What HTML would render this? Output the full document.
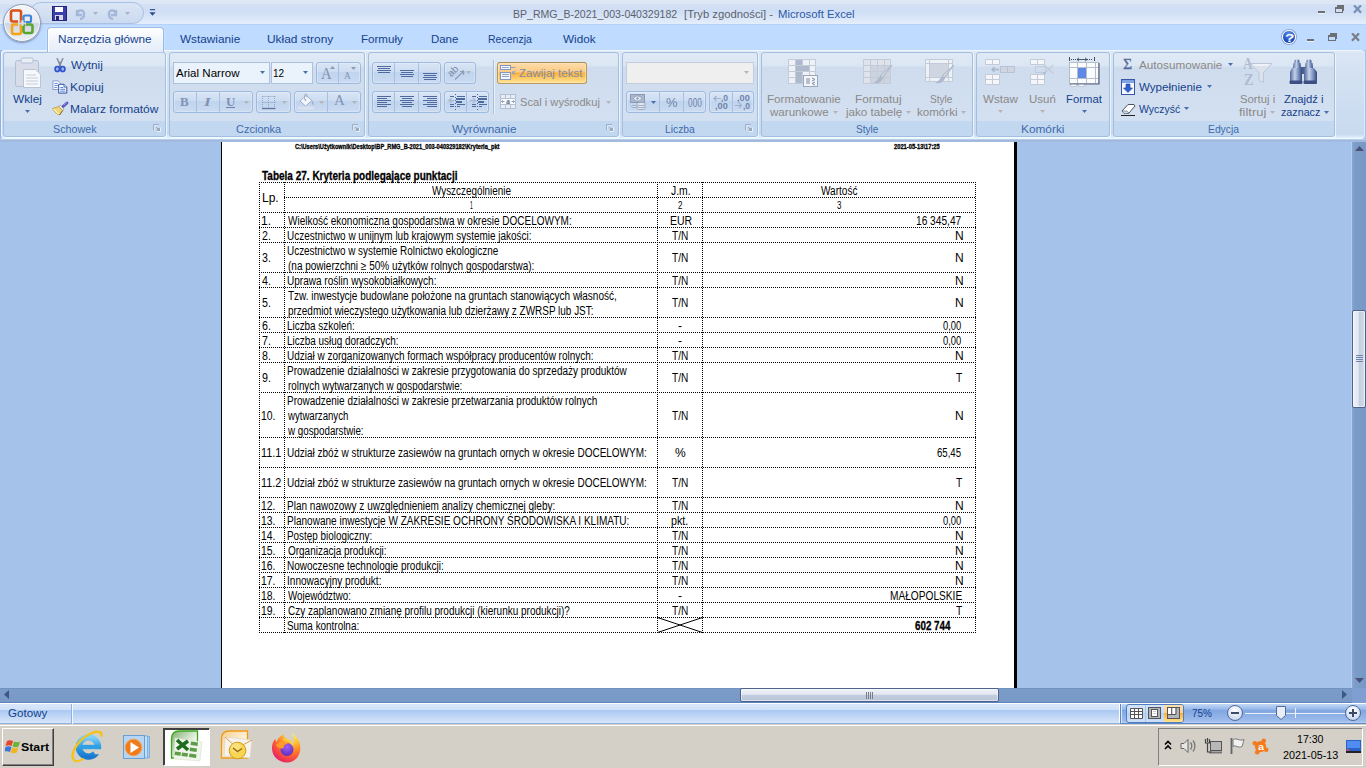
<!DOCTYPE html>
<html lang="pl"><head><meta charset="utf-8"><title>BP_RMG_B-2021_003-040329182 [Tryb zgodności] - Microsoft Excel</title>
<style>
html,body{margin:0;padding:0;background:#d4d0c8;overflow:hidden}
#screen{position:relative;width:1366px;height:768px;overflow:hidden;font-family:'Liberation Sans',sans-serif;font-size:12px;background:#a4c2ea}
#screen div,#screen svg{position:absolute;box-sizing:border-box}
.t{position:absolute;white-space:nowrap;line-height:1;transform-origin:0 0;display:block}
.grp{border:1px solid #a3bfe0;border-radius:3px;background:linear-gradient(to bottom,#e0eaf6 0,#dbe6f4 13px,#cfdcee 14px,#d3e0f1 68px,#c2d8f1 68px,#c2d8f1 100%);box-shadow:1px 1px 0 rgba(255,255,255,.65)}
.btn{border:1px solid #9dbae1;border-radius:3px;background:linear-gradient(to bottom,#d9e5f5 0,#ccdcf1 45%,#c0d4ee 46%,#cadbf1 100%);box-shadow:inset 0 0 0 1px rgba(255,255,255,.25)}
.sep{background:#a6c0e3}

</style></head>
<body>
<div id="screen">
<!-- ribbon -->
<div style="left:0px;top:49px;width:1366px;height:90px;background:#a9c3e8"></div>
<div style="left:0px;top:49px;width:1365px;height:90px;border:1px solid #8db2e3;border-bottom-color:#e6fcff;border-right-color:#cdeefb;border-radius:4px;background:linear-gradient(to bottom,#e4edf9 0,#dbe6f5 3px,#d2e0f2 30px,#c9daf0 84px,#d4e4f6 86px,#e4f0fc 88px);box-shadow:inset 1px 1px 0 #eef4fc"></div>
<div style="left:0px;top:139px;width:1366px;height:3px;background:linear-gradient(to bottom,#b9cbe6 0,#b9cbe6 1px,#a3b8da 1px,#a3b8da 2px,#a2bbe2 2px)"></div>
<div class="grp" style="left:3px;top:52px;width:163px;height:85px;"></div>
<span class="t" style="left:53.00px;top:123px;font:normal normal 11px 'Liberation Sans',sans-serif;color:#3e6aaa;transform:scaleX(0.9778);">Schowek</span>
<svg style="left:153px;top:124px" width="8" height="8" viewBox="0 0 8 8"><path d="M0.500 6V0.500H6" fill="none" stroke="#9fadc4"/><rect x="3" y="3" width="1" height="1" fill="#9fadc4"/><rect x="4" y="4" width="3" height="3" fill="#9eaabc"/><path d="M7.500 3.500v4H4" fill="none" stroke="#e6effa"/><path d="M1.500 6V1.500H6" fill="none" stroke="#e6effa" opacity=".7"/></svg>
<div class="grp" style="left:169px;top:52px;width:196px;height:85px;"></div>
<span class="t" style="left:236.00px;top:123px;font:normal normal 11px 'Liberation Sans',sans-serif;color:#3e6aaa;transform:scaleX(1.0000);">Czcionka</span>
<svg style="left:352px;top:124px" width="8" height="8" viewBox="0 0 8 8"><path d="M0.500 6V0.500H6" fill="none" stroke="#9fadc4"/><rect x="3" y="3" width="1" height="1" fill="#9fadc4"/><rect x="4" y="4" width="3" height="3" fill="#9eaabc"/><path d="M7.500 3.500v4H4" fill="none" stroke="#e6effa"/><path d="M1.500 6V1.500H6" fill="none" stroke="#e6effa" opacity=".7"/></svg>
<div class="grp" style="left:368px;top:52px;width:251px;height:85px;"></div>
<span class="t" style="left:452.00px;top:123px;font:normal normal 11px 'Liberation Sans',sans-serif;color:#3e6aaa;transform:scaleX(1.0667);">Wyrównanie</span>
<svg style="left:606px;top:124px" width="8" height="8" viewBox="0 0 8 8"><path d="M0.500 6V0.500H6" fill="none" stroke="#9fadc4"/><rect x="3" y="3" width="1" height="1" fill="#9fadc4"/><rect x="4" y="4" width="3" height="3" fill="#9eaabc"/><path d="M7.500 3.500v4H4" fill="none" stroke="#e6effa"/><path d="M1.500 6V1.500H6" fill="none" stroke="#e6effa" opacity=".7"/></svg>
<div class="grp" style="left:622px;top:52px;width:136px;height:85px;"></div>
<span class="t" style="left:665.06px;top:123px;font:normal normal 11px 'Liberation Sans',sans-serif;color:#3e6aaa;transform:scaleX(0.9355);">Liczba</span>
<svg style="left:745px;top:124px" width="8" height="8" viewBox="0 0 8 8"><path d="M0.500 6V0.500H6" fill="none" stroke="#9fadc4"/><rect x="3" y="3" width="1" height="1" fill="#9fadc4"/><rect x="4" y="4" width="3" height="3" fill="#9eaabc"/><path d="M7.500 3.500v4H4" fill="none" stroke="#e6effa"/><path d="M1.500 6V1.500H6" fill="none" stroke="#e6effa" opacity=".7"/></svg>
<div class="grp" style="left:761px;top:52px;width:212px;height:85px;"></div>
<span class="t" style="left:856.00px;top:123px;font:normal normal 11px 'Liberation Sans',sans-serif;color:#3e6aaa;transform:scaleX(0.9167);">Style</span>
<div class="grp" style="left:976px;top:52px;width:134px;height:85px;"></div>
<span class="t" style="left:1020.92px;top:123px;font:normal normal 11px 'Liberation Sans',sans-serif;color:#3e6aaa;transform:scaleX(1.0769);">Komórki</span>
<div class="grp" style="left:1113px;top:52px;width:222px;height:85px;"></div>
<span class="t" style="left:1208.06px;top:123px;font:normal normal 11px 'Liberation Sans',sans-serif;color:#3e6aaa;transform:scaleX(0.9375);">Edycja</span>
<svg style="left:14px;top:57px" width="28" height="32" viewBox="0 0 28 32"><rect x="1.5" y="3.5" width="23" height="26" rx="2" fill="#d6dde9" stroke="#b3bfd3"/><rect x="7" y="1" width="12" height="5" rx="1.5" fill="#e9edf4" stroke="#b3bfd3"/><path d="M9.5 12.5h12l5 5v13h-17z" fill="#f6f8fb" stroke="#b9c4d6"/><path d="M12 18h10M12 21h12M12 24h12M12 27h12" stroke="#c5cedd"/></svg>
<span class="t" style="left:13.00px;top:93px;font:normal normal 11px 'Liberation Sans',sans-serif;color:#15428b;transform:scaleX(1.0741);">Wklej</span>
<svg style="left:25px;top:110px" width="5" height="3" viewBox="0 0 5 3"><path d="M0 0h5L2.500 3z" fill="#4b6fae"/></svg>
<svg style="left:54px;top:57px" width="12" height="16" viewBox="0 0 12 16"><path d="M3 1l4 9M9 1L5 10" stroke="#7d8696" stroke-width="1.700" fill="none"/><path d="M3.300 1l1.500 3.500M8.700 1L7.200 4.500" stroke="#aeb6c4" stroke-width=".8" fill="none"/><ellipse cx="3.300" cy="12" rx="2.200" ry="2.500" fill="#9fb6ef" stroke="#2f55c8" stroke-width="1.700"/><ellipse cx="8.700" cy="12" rx="2.200" ry="2.500" fill="#9fb6ef" stroke="#2f55c8" stroke-width="1.700"/></svg>
<span class="t" style="left:71.00px;top:59px;font:normal normal 11px 'Liberation Sans',sans-serif;color:#15428b;transform:scaleX(1.0667);">Wytnij</span>
<svg style="left:52px;top:80px" width="16" height="14" viewBox="0 0 16 14"><path d="M0.900 0.900h5.200l2.400 2.400v6.200H0.900z" fill="#fbfcfe" stroke="#7f94c4" stroke-width=".9"/><path d="M2.300 3.500h3.500M2.300 5.500h4.500M2.300 7.500h3" stroke="#5b84d8" stroke-width=".9"/><path d="M6.700 4.300h5.300l2.800 2.800v6H6.700z" fill="#fbfcfe" stroke="#3450a0" stroke-width="1"/><path d="M12 4.300v2.800h2.800" fill="#dfe7f7" stroke="#3450a0" stroke-width=".8"/><path d="M8.300 7.500h3M8.300 9.300h5M8.300 11.200h5" stroke="#3f74d8" stroke-width=".9"/></svg>
<span class="t" style="left:69.90px;top:81px;font:normal normal 11px 'Liberation Sans',sans-serif;color:#15428b;transform:scaleX(1.1034);">Kopiuj</span>
<svg style="left:52px;top:101px" width="17" height="16" viewBox="0 0 17 16"><path d="M11 5.500l4-3.500" stroke="#5a4fc0" stroke-width="2.800" stroke-linecap="round"/><path d="M12 4l2.500-2" stroke="#9a92e8" stroke-width="1" stroke-linecap="round"/><path d="M8.200 4.200l4 4-1.600 1.400-4-4z" fill="#e8eaee" stroke="#8a8f9a" stroke-width=".7"/><path d="M6.800 5.500l3.800 4-3 4.500c-2.500-.500-5.500-3-7-6.500z" fill="#ecd67a" stroke="#b89638" stroke-width=".8"/><path d="M1.500 8l5 5" stroke="#fbf0b8" stroke-width="1.200"/><path d="M7.500 14l3-4.300" stroke="#8a6a20" stroke-width="1"/></svg>
<span class="t" style="left:69.91px;top:103px;font:normal normal 11px 'Liberation Sans',sans-serif;color:#15428b;transform:scaleX(1.0875);">Malarz formatów</span>
<div style="left:173px;top:62px;width:97px;height:22px;border:1px solid #abc1de;background:#eaf2fb"></div>
<span class="t" style="left:176.00px;top:67px;font:normal normal 11px 'Liberation Sans',sans-serif;color:#000;transform:scaleX(1.0492);">Arial Narrow</span>
<svg style="left:260px;top:71px" width="5" height="3" viewBox="0 0 5 3"><path d="M0 0h5L2.500 3z" fill="#4b6fae"/></svg>
<div style="left:271px;top:62px;width:42px;height:22px;border:1px solid #abc1de;background:#eaf2fb"></div>
<span class="t" style="left:273.09px;top:67px;font:normal normal 11px 'Liberation Sans',sans-serif;color:#000;transform:scaleX(0.9091);">12</span>
<svg style="left:303px;top:71px" width="5" height="3" viewBox="0 0 5 3"><path d="M0 0h5L2.500 3z" fill="#4b6fae"/></svg>
<div class="btn" style="left:316px;top:62px;width:45px;height:22px;"></div>
<div class="sep" style="left:338px;top:63px;width:1px;height:20px;"></div>
<span class="t" style="left:321.00px;top:65px;font:normal normal 16px 'Liberation Serif',serif;color:#8292b2;transform:scaleX(0.9167);">A</span>
<span class="t" style="left:344.00px;top:70px;font:normal normal 10.5px 'Liberation Serif',serif;color:#8292b2;transform:scaleX(0.8750);">A</span>
<svg style="left:330px;top:66px" width="26" height="4" viewBox="0 0 26 4"><path d="M0 3l2.500-3L5 3z" fill="#8e9ab0"/><path d="M21 1h5l-2.500 3z" fill="#8e9ab0"/></svg>
<div class="btn" style="left:173px;top:91px;width:80px;height:22px;"></div>
<div class="sep" style="left:196px;top:92px;width:1px;height:20px;"></div>
<div class="sep" style="left:219px;top:92px;width:1px;height:20px;"></div>
<span class="t" style="left:180.00px;top:94px;font:normal bold 13px 'Liberation Serif',serif;color:#8292b2;transform:scaleX(1.0000);">B</span>
<span class="t" style="left:204.00px;top:94px;font:italic bold 13px 'Liberation Serif',serif;color:#8292b2;transform:scaleX(1.3333);">I</span>
<span class="t" style="left:226.00px;top:94px;font:normal bold 13px 'Liberation Serif',serif;color:#8292b2;transform:scaleX(1.0000);">U</span>
<div style="left:226px;top:107px;width:9px;height:1px;background:#6f83aa"></div>
<svg style="left:244px;top:101px" width="5" height="3" viewBox="0 0 5 3"><path d="M0 0h5L2.500 3z" fill="#b3b5b9"/></svg>
<div class="btn" style="left:256px;top:91px;width:35px;height:22px;"></div>
<svg style="left:262px;top:96px" width="14" height="14" viewBox="0 0 14 14"><path d="M0.500 0.500h13M0.500 6.500h13M0.500 0v12M6.500 0v12M12.500 0v12" fill="none" stroke="#93a3c2" stroke-dasharray="1 1"/><path d="M0 12.500h13.500" stroke="#5f739c" stroke-width="1.300"/></svg>
<svg style="left:282px;top:101px" width="5" height="3" viewBox="0 0 5 3"><path d="M0 0h5L2.500 3z" fill="#b3b5b9"/></svg>
<div class="btn" style="left:294px;top:91px;width:67px;height:22px;"></div>
<div class="sep" style="left:327px;top:92px;width:1px;height:20px;"></div>
<svg style="left:297px;top:93px" width="18" height="17" viewBox="0 0 18 17"><path d="M3 8l6-5.500 6 5-6.500 5.500z" fill="#f3f6fb" stroke="#9aa9c6" stroke-width=".9"/><path d="M7.500 6.500V2.200c0-1.500 2.600-1.500 2.600 0v2" fill="none" stroke="#9aa9c6" stroke-width=".9"/><path d="M15 7.500c1.500 1.500 2 3.500 1.500 5-.800-1-2-2.500-1.500-5z" fill="#9aa9c6"/><circle cx="8.500" cy="7" r="1" fill="#aab6cf"/><rect x="1" y="13.500" width="16" height="3" fill="#d8e0ee"/></svg>
<svg style="left:319px;top:101px" width="5" height="3" viewBox="0 0 5 3"><path d="M0 0h5L2.500 3z" fill="#b3b5b9"/></svg>
<span class="t" style="left:334.00px;top:92px;font:normal normal 15px 'Liberation Serif',serif;color:#8292b2;transform:scaleX(1.0000);">A</span>
<svg style="left:352px;top:101px" width="5" height="3" viewBox="0 0 5 3"><path d="M0 0h5L2.500 3z" fill="#b3b5b9"/></svg>
<div class="btn" style="left:372px;top:62px;width:69px;height:22px;"></div>
<div class="sep" style="left:394px;top:63px;width:1px;height:20px;"></div>
<div class="sep" style="left:418px;top:63px;width:1px;height:20px;"></div>
<svg style="left:377px;top:66px" width="14" height="8" viewBox="0 0 14 8"><rect x="0" y="0" width="14" height="1" fill="#4f6a9c"/><rect x="1" y="2" width="12" height="1" fill="#4f6a9c"/><rect x="0" y="4" width="14" height="1" fill="#4f6a9c"/><rect x="1" y="6" width="12" height="1" fill="#4f6a9c"/></svg>
<svg style="left:400px;top:70px" width="14" height="8" viewBox="0 0 14 8"><rect x="0" y="0" width="14" height="1" fill="#4f6a9c"/><rect x="1" y="2" width="12" height="1" fill="#4f6a9c"/><rect x="0" y="4" width="14" height="1" fill="#4f6a9c"/><rect x="1" y="6" width="12" height="1" fill="#4f6a9c"/></svg>
<svg style="left:423px;top:73px" width="14" height="8" viewBox="0 0 14 8"><rect x="0" y="0" width="14" height="1" fill="#4f6a9c"/><rect x="1" y="2" width="12" height="1" fill="#4f6a9c"/><rect x="0" y="4" width="14" height="1" fill="#4f6a9c"/><rect x="1" y="6" width="12" height="1" fill="#4f6a9c"/></svg>
<div class="btn" style="left:444px;top:62px;width:32px;height:22px;"></div>
<svg style="left:448px;top:64px" width="17" height="17" viewBox="0 0 17 17"><path d="M7 15.500L16 7M16 7l-4 .500M16 7l-.500 4" stroke="#8a9ab8" stroke-width="1.100" fill="none"/></svg>
<span class="t" style="left:445.00px;top:71px;font:normal normal 10px 'Liberation Sans',sans-serif;color:#7b8aa8;transform:scaleX(1.0000);rotate:-45deg">ab</span>
<svg style="left:466px;top:71px" width="5" height="3" viewBox="0 0 5 3"><path d="M0 0h5L2.500 3z" fill="#b3b5b9"/></svg>
<div class="btn" style="left:372px;top:91px;width:69px;height:22px;"></div>
<div class="sep" style="left:394px;top:92px;width:1px;height:20px;"></div>
<div class="sep" style="left:418px;top:92px;width:1px;height:20px;"></div>
<svg style="left:377px;top:96px" width="14" height="12" viewBox="0 0 14 12"><rect x="0" y="0" width="14" height="1" fill="#4f6a9c"/><rect x="0" y="2" width="10" height="1" fill="#4f6a9c"/><rect x="0" y="4" width="14" height="1" fill="#4f6a9c"/><rect x="0" y="6" width="10" height="1" fill="#4f6a9c"/><rect x="0" y="8" width="14" height="1" fill="#4f6a9c"/><rect x="0" y="10" width="10" height="1" fill="#4f6a9c"/></svg>
<svg style="left:400px;top:96px" width="14" height="12" viewBox="0 0 14 12"><rect x="0" y="0" width="14" height="1" fill="#4f6a9c"/><rect x="2" y="2" width="10" height="1" fill="#4f6a9c"/><rect x="0" y="4" width="14" height="1" fill="#4f6a9c"/><rect x="2" y="6" width="10" height="1" fill="#4f6a9c"/><rect x="0" y="8" width="14" height="1" fill="#4f6a9c"/><rect x="2" y="10" width="10" height="1" fill="#4f6a9c"/></svg>
<svg style="left:423px;top:96px" width="14" height="12" viewBox="0 0 14 12"><rect x="0" y="0" width="14" height="1" fill="#4f6a9c"/><rect x="4" y="2" width="10" height="1" fill="#4f6a9c"/><rect x="0" y="4" width="14" height="1" fill="#4f6a9c"/><rect x="4" y="6" width="10" height="1" fill="#4f6a9c"/><rect x="0" y="8" width="14" height="1" fill="#4f6a9c"/><rect x="4" y="10" width="10" height="1" fill="#4f6a9c"/></svg>
<div class="btn" style="left:444px;top:91px;width:45px;height:22px;"></div>
<div class="sep" style="left:466px;top:92px;width:1px;height:20px;"></div>
<svg style="left:448px;top:94px" width="17" height="16" viewBox="0 0 17 16"><path d="M7.500 0v16" stroke="#4f6a9c" stroke-dasharray="1 2"/><path d="M2 2.500h4M9 2.500h8M2 10.500h4M9 10.500h8M2 12.500h4M9 12.500h3" stroke="#4f6a9c"/><rect x="8" y="4" width="9" height="2" fill="#4f6a9c"/><rect x="8" y="7" width="6" height="2" fill="#4f6a9c"/><path d="M6 6.500H1M3.500 4L1 6.500 3.500 9" stroke="#a9b8d3" stroke-width="1.300" fill="none"/></svg>
<svg style="left:470px;top:94px" width="17" height="16" viewBox="0 0 17 16"><path d="M7.500 0v16" stroke="#4f6a9c" stroke-dasharray="1 2"/><path d="M2 2.500h4M9 2.500h8M2 10.500h4M9 10.500h8M2 12.500h4M9 12.500h3" stroke="#4f6a9c"/><rect x="8" y="4" width="9" height="2" fill="#4f6a9c"/><rect x="8" y="7" width="6" height="2" fill="#4f6a9c"/><path d="M0 6.500h5M3 4l2.500 2.500L3 9" stroke="#a9b8d3" stroke-width="1.300" fill="none"/></svg>
<div style="left:493px;top:60px;width:1px;height:54px;background:#a9bfdb"></div>
<div style="left:494px;top:60px;width:1px;height:54px;background:#e9f1fa"></div>
<div style="left:497px;top:62px;width:90px;height:22px;border:1px solid #b89a5c;border-top-color:#a98b55;border-radius:3px;background:linear-gradient(to bottom,#fddcaa 0,#fccb84 45%,#fbb03c 50%,#fdd06f 80%,#fee497 100%);box-shadow:inset 0 0 0 1px rgba(255,240,200,.5)"></div>
<svg style="left:500px;top:65px" width="17" height="15" viewBox="0 0 17 15"><rect x="0.500" y="0.500" width="10" height="4" fill="#f3f6fb" stroke="#8496c0"/><path d="M2 2.500h7" stroke="#8496c0" stroke-width=".8"/><path d="M10.500 2.500h5" fill="none" stroke="#8496c0" stroke-width=".9"/><path d="M15.500 5.500l-2.500 3M12.800 6v2.700h2.700" fill="none" stroke="#7e9ad0" stroke-width=".9"/><rect x="0.500" y="7.500" width="10" height="7" fill="#f3f6fb" stroke="#8496c0"/><path d="M2 9.500h7M2 11.500h7" stroke="#8496c0" stroke-width=".9"/></svg>
<span class="t" style="left:519.00px;top:67px;font:normal normal 11px 'Liberation Sans',sans-serif;color:#848ca2;transform:scaleX(1.0492);">Zawijaj tekst</span>
<svg style="left:500px;top:94px" width="16" height="15" viewBox="0 0 16 15"><rect x="0.500" y="0.500" width="15" height="14" fill="#e9edf4" stroke="#b4bfd2"/><path d="M0.500 4.500h15M0.500 10.500h15M5.500 0.500v4M10.500 0.500v4M5.500 10.500v4M10.500 10.500v4" stroke="#b4bfd2"/><rect x="1" y="5" width="14" height="5" fill="#fbfcfe"/><path d="M1.500 7.500h3M11.500 7.500h3M3 6.300L1.500 7.500 3 8.700M13 6.300l1.500 1.200L13 8.700" stroke="#7f8daa" stroke-width=".8" fill="none"/></svg>
<span class="t" style="left:506.00px;top:97px;font:normal bold 8px 'Liberation Serif',serif;color:#5f6f8f;transform:scaleX(1.0000);">a</span>
<span class="t" style="left:520.00px;top:96px;font:normal normal 11px 'Liberation Sans',sans-serif;color:#8b8987;transform:scaleX(1.0127);">Scal i wyśrodkuj</span>
<svg style="left:606px;top:101px" width="5" height="3" viewBox="0 0 5 3"><path d="M0 0h5L2.500 3z" fill="#b3b5b9"/></svg>
<div style="left:626px;top:62px;width:128px;height:22px;border:1px solid #c3cddb;background:#efefef"></div>
<svg style="left:744px;top:71px" width="5" height="3" viewBox="0 0 5 3"><path d="M0 0h5L2.500 3z" fill="#b3b5b9"/></svg>
<div class="btn" style="left:626px;top:91px;width:80px;height:22px;"></div>
<div class="sep" style="left:659px;top:92px;width:1px;height:20px;"></div>
<div class="sep" style="left:683px;top:92px;width:1px;height:20px;"></div>
<svg style="left:630px;top:94px" width="17" height="16" viewBox="0 0 17 16"><rect x="0.500" y="0.500" width="14" height="8" fill="#aab6cc" stroke="#8d9bb6"/><ellipse cx="7.500" cy="4.500" rx="4" ry="2.600" fill="#dfe5ef" stroke="#8d9bb6" stroke-width=".8"/><path d="M6 4.500h3M7.500 3v3" stroke="#8d9bb6" stroke-width=".8"/><g fill="#e6ebf3" stroke="#8d9bb6" stroke-width=".8"><ellipse cx="11" cy="14" rx="4.500" ry="1.600"/><ellipse cx="11" cy="12" rx="4.500" ry="1.600"/><ellipse cx="11" cy="10" rx="4.500" ry="1.600"/><ellipse cx="4" cy="12.500" rx="2.500" ry="1"/></g></svg>
<svg style="left:651px;top:101px" width="5" height="3" viewBox="0 0 5 3"><path d="M0 0h5L2.500 3z" fill="#4b6fae"/></svg>
<span class="t" style="left:666.00px;top:95px;font:normal normal 13px 'Liberation Sans',sans-serif;color:#6f83aa;transform:scaleX(1.0000);">%</span>
<span class="t" style="left:688.00px;top:96px;font:normal normal 12.5px 'Liberation Sans',sans-serif;color:#6f83aa;transform:scaleX(0.6667);">000</span>
<div class="btn" style="left:709px;top:91px;width:45px;height:22px;"></div>
<div class="sep" style="left:732px;top:92px;width:1px;height:20px;"></div>
<span class="t" style="left:721.00px;top:93px;font:normal bold 8.5px 'Liberation Sans',sans-serif;color:#6f83aa;transform:scaleX(1.0000);">,0</span>
<span class="t" style="left:715.00px;top:101px;font:normal bold 8.5px 'Liberation Sans',sans-serif;color:#6f83aa;transform:scaleX(1.0833);">,00</span>
<span class="t" style="left:737.00px;top:93px;font:normal bold 8.5px 'Liberation Sans',sans-serif;color:#6f83aa;transform:scaleX(1.0833);">,00</span>
<span class="t" style="left:743.00px;top:101px;font:normal bold 8.5px 'Liberation Sans',sans-serif;color:#6f83aa;transform:scaleX(1.0000);">,0</span>
<svg style="left:713px;top:95px" width="30" height="14" viewBox="0 0 30 14"><path d="M8 3.500H1M3.500 1L1 3.500 3.500 6" stroke="#9fb0cf" stroke-width="1.200" fill="none"/><path d="M22 10.500h6.500M26 8l2.500 2.500L26 13" stroke="#9fb0cf" stroke-width="1.200" fill="none"/></svg>
<svg style="left:788px;top:59px" width="31" height="29" viewBox="0 0 31 29"><path d="M0.5 0.5h27v24h-27zM0.500 6.500h27M0.500 12.500h27M0.500 18.500h27M7.500 0.500v24M14.500 0.500v24M21.500 0.500v24" fill="#eef1f6" stroke="#c3cbd9"/><rect x="8" y="1" width="6" height="5" fill="#aeb9cd"/><rect x="8" y="7" width="13" height="5" fill="#aeb9cd"/><rect x="8" y="13" width="6" height="11" fill="#aeb9cd"/><rect x="15.500" y="16.500" width="14" height="11" fill="#f4f6fa" stroke="#9aa6bb"/><path d="M18 20h4M18 22h4M18 24h4M24 19l3 1.500-3 1.500M27 23l-3 1.500 3 1.500" stroke="#7d8aa3" fill="none"/></svg>
<span class="t" style="left:766.94px;top:93px;font:normal normal 11px 'Liberation Sans',sans-serif;color:#8b8987;transform:scaleX(1.0580);">Formatowanie</span>
<span class="t" style="left:770.00px;top:106px;font:normal normal 11px 'Liberation Sans',sans-serif;color:#8b8987;transform:scaleX(1.0536);">warunkowe</span>
<svg style="left:833px;top:110.5px" width="5" height="3" viewBox="0 0 5 3"><path d="M0 0h5L2.500 3z" fill="#b3b5b9"/></svg>
<svg style="left:863px;top:59px" width="31" height="29" viewBox="0 0 31 29"><path d="M0.5 0.5h27v24h-27zM0.500 6.500h27M0.500 12.500h27M0.500 18.500h27M7.500 0.500v24M14.500 0.500v24M21.500 0.500v24" fill="#dfe4ec" stroke="#c3cbd9"/><rect x="8" y="7" width="19" height="17" fill="#c4ccda" opacity=".7"/><path d="M29 6l-9 12-3 1 1-3z" fill="#d4dae5" stroke="#aab4c6"/><path d="M18 17c-3 1-3 5-8 7 5 1 9-1 10-5z" fill="#aeb9cd"/></svg>
<span class="t" style="left:854.93px;top:93px;font:normal normal 11px 'Liberation Sans',sans-serif;color:#8b8987;transform:scaleX(1.0714);">Formatuj</span>
<span class="t" style="left:846.00px;top:106px;font:normal normal 11px 'Liberation Sans',sans-serif;color:#8b8987;transform:scaleX(1.0566);">jako tabelę</span>
<svg style="left:906px;top:110.5px" width="5" height="3" viewBox="0 0 5 3"><path d="M0 0h5L2.500 3z" fill="#b3b5b9"/></svg>
<svg style="left:925px;top:59px" width="31" height="29" viewBox="0 0 31 29"><path d="M0.5 0.5h27v22h-27z" fill="#eef1f6" stroke="#c3cbd9"/><path d="M0.500 4.500h27M0.500 18.500h27M4.500 0.500v22M23.500 0.500v22" stroke="#c3cbd9"/><rect x="5" y="5" width="18" height="13" fill="#cfd6e2"/><path d="M29 6l-9 12-3 1 1-3z" fill="#d4dae5" stroke="#aab4c6"/><path d="M18 17c-3 1-3 5-8 7 5 1 9-1 10-5z" fill="#aeb9cd"/></svg>
<span class="t" style="left:930.00px;top:93px;font:normal normal 11px 'Liberation Sans',sans-serif;color:#8b8987;transform:scaleX(0.9167);">Style</span>
<span class="t" style="left:917.00px;top:106px;font:normal normal 11px 'Liberation Sans',sans-serif;color:#8b8987;transform:scaleX(1.0526);">komórki</span>
<svg style="left:961px;top:110.5px" width="5" height="3" viewBox="0 0 5 3"><path d="M0 0h5L2.500 3z" fill="#b3b5b9"/></svg>
<svg style="left:985px;top:59px" width="31" height="27" viewBox="0 0 31 27"><path d="M0.500 0.500h14v5h-14zM7.500 0.500v5" fill="#f4f6fa" stroke="#c3cbd9"/><path d="M0.500 15.500h14v10h-14zM7.500 15.500v10M0.500 20.500h14" fill="#f4f6fa" stroke="#c3cbd9"/><path d="M15.500 7.500h14v6h-14zM22.500 7.500v6" fill="#cfd6e2" stroke="#b9c2d3"/><path d="M14 10.500H7M9.500 8l-2.500 2.500 2.500 2.500" stroke="#aab4c6" stroke-width="1.300" fill="none"/></svg>
<span class="t" style="left:983.00px;top:93px;font:normal normal 11px 'Liberation Sans',sans-serif;color:#8b8987;transform:scaleX(1.0606);">Wstaw</span>
<svg style="left:998px;top:110px" width="5" height="3" viewBox="0 0 5 3"><path d="M0 0h5L2.500 3z" fill="#b9b4ae"/></svg>
<svg style="left:1030px;top:59px" width="27" height="27" viewBox="0 0 27 27"><path d="M0.500 0.500h14v5h-14zM7.500 0.500v5" fill="#f4f6fa" stroke="#c3cbd9"/><path d="M0.500 15.500h14v10h-14zM7.500 15.500v10M0.500 20.500h14" fill="#f4f6fa" stroke="#c3cbd9"/><path d="M5.500 7.500h10v6h-10z" fill="none" stroke="#aeb9cd" stroke-dasharray="1 1"/><path d="M14 6l9.500 8.500M23.500 6L14 14.500" stroke="#c3cbd9" stroke-width="1.400"/><circle cx="14.500" cy="14.300" r="1.200" fill="#aeb9cd"/></svg>
<span class="t" style="left:1028.96px;top:93px;font:normal normal 11px 'Liberation Sans',sans-serif;color:#8b8987;transform:scaleX(1.0417);">Usuń</span>
<svg style="left:1040px;top:110px" width="5" height="3" viewBox="0 0 5 3"><path d="M0 0h5L2.500 3z" fill="#b9b4ae"/></svg>
<svg style="left:1068px;top:57px" width="32" height="30" viewBox="0 0 32 30"><path d="M1.500 0v4M26.500 0v4" stroke="#3f4a5f"/><path d="M3 2.500h6M19 2.500h6" stroke="#3f4a5f" stroke-dasharray="1 1"/><path d="M9 2.500h10M11 0.800L9 2.500l2 1.700M17 0.800l2 1.700-2 1.700" stroke="#3f4a5f" fill="none" stroke-width=".9"/><path d="M2 26h7v2.500c-2 1.500-5 1.500-7 0zM10 26h7v2.500c-2 1.500-5 1.500-7 0z" fill="#fff" stroke="#aab4c6" stroke-width=".8"/><rect x="1.500" y="5.500" width="29" height="21" fill="#fbfcfe" stroke="#b4bdcc"/><path d="M1.500 10.500h29M1.500 21.500h29M9.500 5.500v21M18.500 5.500v21M27.500 5.500v21" stroke="#b4bdcc"/><rect x="10" y="11" width="8" height="10" fill="#5f88e4"/><path d="M31 6v21H2" fill="none" stroke="#5a6780" stroke-width="1.200"/></svg>
<span class="t" style="left:1065.97px;top:93px;font:normal normal 11px 'Liberation Sans',sans-serif;color:#15428b;transform:scaleX(1.0294);">Format</span>
<svg style="left:1082px;top:110px" width="5" height="3" viewBox="0 0 5 3"><path d="M0 0h5L2.500 3z" fill="#4b6fae"/></svg>
<span class="t" style="left:1123.00px;top:57px;font:normal normal 14px 'Liberation Serif',serif;color:#556a96;transform:scaleX(1.1250);-webkit-text-stroke:.3px #556a96">Σ</span>
<span class="t" style="left:1139.00px;top:59px;font:normal normal 11px 'Liberation Sans',sans-serif;color:#8b8987;transform:scaleX(1.0641);">Autosumowanie</span>
<svg style="left:1228px;top:63px" width="5" height="3" viewBox="0 0 5 3"><path d="M0 0h5L2.500 3z" fill="#4b6fae"/></svg>
<svg style="left:1121px;top:79px" width="14" height="16" viewBox="0 0 14 16"><rect x="0.5" y="0.5" width="13" height="15" fill="#f4f8ff" stroke="#3a56a5"/><rect x="1" y="1" width="12" height="3" fill="#7ea2e6"/><path d="M5 5h4v4h2.500L7 13.500 2.500 9H5z" fill="#2f62d0" stroke="#1b3f98" stroke-width=".6"/></svg>
<span class="t" style="left:1139.00px;top:81px;font:normal normal 11px 'Liberation Sans',sans-serif;color:#15428b;transform:scaleX(1.0500);">Wypełnienie</span>
<svg style="left:1207px;top:85px" width="5" height="3" viewBox="0 0 5 3"><path d="M0 0h5L2.500 3z" fill="#4b6fae"/></svg>
<svg style="left:1121px;top:102px" width="15" height="14" viewBox="0 0 15 14"><path d="M1 9l6-6.500h6l1 1.500-6 7H3z" fill="#fff" stroke="#4a5568"/><path d="M1 9l2 2.500h5l-2-2.500z" fill="#d9dee7" stroke="#4a5568" stroke-width=".6"/><path d="M0 13.500h14" stroke="#222"/></svg>
<span class="t" style="left:1139.00px;top:103px;font:normal normal 11px 'Liberation Sans',sans-serif;color:#15428b;transform:scaleX(0.9535);">Wyczyść</span>
<svg style="left:1184px;top:107px" width="5" height="3" viewBox="0 0 5 3"><path d="M0 0h5L2.500 3z" fill="#4b6fae"/></svg>
<svg style="left:1250px;top:62px" width="23" height="22" viewBox="0 0 23 22"><path d="M0.500 1.500h21.500l-8.500 9v10l-4.500-2v-8z" fill="#dce2ec" stroke="#bcc6d8"/><path d="M2 2h18l-2 2H4z" fill="#eef1f6"/></svg>
<span class="t" style="left:1243.00px;top:55px;font:normal bold 16px 'Liberation Serif',serif;color:#b0bbd0;transform:scaleX(0.8333);">A</span>
<span class="t" style="left:1244.00px;top:71px;font:normal bold 16px 'Liberation Serif',serif;color:#b0bbd0;transform:scaleX(0.9000);">Z</span>
<span class="t" style="left:1240.00px;top:93px;font:normal normal 11px 'Liberation Sans',sans-serif;color:#8b8987;transform:scaleX(1.0294);">Sortuj i</span>
<span class="t" style="left:1239.00px;top:106px;font:normal normal 11px 'Liberation Sans',sans-serif;color:#8b8987;transform:scaleX(1.1739);">filtruj</span>
<svg style="left:1270px;top:110.5px" width="5" height="3" viewBox="0 0 5 3"><path d="M0 0h5L2.500 3z" fill="#b3b5b9"/></svg>
<svg style="left:1289px;top:59px" width="29" height="26" viewBox="0 0 29 26"><defs><linearGradient id="bn" x1="0" x2="1"><stop offset="0" stop-color="#4f6598"/><stop offset=".4" stop-color="#c4d1ea"/><stop offset=".7" stop-color="#7d92c0"/><stop offset="1" stop-color="#33477a"/></linearGradient></defs><rect x="5.500" y="0.500" width="5" height="4" rx="1.500" fill="url(#bn)"/><rect x="17.500" y="0.500" width="5" height="4" rx="1.500" fill="url(#bn)"/><path d="M4.500 4h7l.500 5h-8z" fill="url(#bn)"/><path d="M16.500 4h7l.500 5h-8z" fill="url(#bn)"/><rect x="11" y="8" width="6" height="7" fill="#4a5f92"/><path d="M3 9h10v13H1V13z" fill="url(#bn)"/><path d="M15 9h10l3 4v9H15z" fill="url(#bn)"/><rect x="0.500" y="21.500" width="13" height="3.500" rx="1.200" fill="#3c4f82"/><rect x="14.500" y="21.500" width="13.500" height="3.500" rx="1.200" fill="#3c4f82"/></svg>
<span class="t" style="left:1284.00px;top:93px;font:normal normal 11px 'Liberation Sans',sans-serif;color:#15428b;transform:scaleX(1.0263);">Znajdź i</span>
<span class="t" style="left:1281.00px;top:106px;font:normal normal 11px 'Liberation Sans',sans-serif;color:#15428b;transform:scaleX(0.9750);">zaznacz</span>
<svg style="left:1324px;top:110.5px" width="5" height="3" viewBox="0 0 5 3"><path d="M0 0h5L2.500 3z" fill="#4b6fae"/></svg>
<!-- title bar -->
<div style="left:0px;top:0px;width:1366px;height:26px;background:linear-gradient(to bottom,#dde7f5 0,#dde7f5 4px,#d4e1f5 4px,#cfdef5 11px,#d8e5f8 17px,#e4eefb 24px,#b3d3f9 24px,#b3d3f9 25px,#bfdbff 25px)"></div>
<div style="left:0px;top:26px;width:1366px;height:24px;background:#bfdbff"></div>
<div style="left:30px;top:2px;width:114px;height:22px;border:1px solid #a9c0e2;border-radius:11px;background:linear-gradient(to bottom,#dbe6f5,#cbdaf0)"></div>
<svg style="left:52px;top:6px" width="15" height="15" viewBox="0 0 15 15"><rect x="0.5" y="0.5" width="14" height="14" fill="#3b3fa8" stroke="#23257a"/><rect x="3" y="1" width="8" height="5" fill="#fff"/><rect x="3" y="9" width="8" height="5" fill="#d8d8e8"/><rect x="4" y="10" width="3" height="4" fill="#23257a"/></svg>
<svg style="left:74px;top:6px" width="60" height="15" viewBox="0 0 60 15"><g fill="none" stroke="#a3b7d8" stroke-width="2.400"><path d="M3 4 v5 h5 M3 8 c1-5 8-5 7 1 c0 2-2 4-4 4"/><path d="M42 4 v5 h-5 M42 8 c-1-5-8-5-7 1 c0 2 2 4 4 4"/></g><path d="M19 6h5l-2.5 3z M51 6h5l-2.5 3z" fill="#aab3c0"/></svg>
<svg style="left:149px;top:9px" width="7" height="8" viewBox="0 0 8 9"><rect x="1" y="0" width="6" height="1.3" fill="#2b4f8c"/><path d="M0.5 3.5h7L4 7.5z" fill="#2b4f8c"/></svg>
<div style="left:3px;top:4px;width:38px;height:38px;border-radius:50%;background:linear-gradient(to bottom,#f4f6fa 0,#e6eaf2 48%,#cdd5e4 52%,#eef1f7 100%);border:1px solid #8f9db8;box-shadow:0 1px 2px rgba(60,80,120,.55),inset 0 0 0 1px rgba(255,255,255,.8)"></div>
<svg style="left:9px;top:9px" width="26" height="27" viewBox="0 0 26 27"><path d="M12 11.500V3.500c0-1.200-.800-2-2-2H4c-1.200 0-2 .800-2 2v7c0 1.200.800 2 2 2h5" fill="none" stroke="#d8501a" stroke-width="2.600" stroke-linejoin="round"/><path d="M14.500 11.500V8c0-1 .600-1.500 1.500-1.500h4.500c1 0 1.500.500 1.500 1.500v3.500c0 1-.500 1.500-1.500 1.500H17" fill="none" stroke="#3f86d6" stroke-width="2.200"/><path d="M9 15.500H5c-1.200 0-2 .800-2 2v5.500c0 1.200.800 2 2 2h5c1.200 0 2-.800 2-2V17" fill="none" stroke="#f3a417" stroke-width="2.600"/><path d="M17 15.500h4.500c1.200 0 2 .800 2 2V22c0 1.200-.800 2-2 2h-5c-1.200 0-2-.800-2-2v-5" fill="none" stroke="#5aa52f" stroke-width="2.600"/><circle cx="11.500" cy="12.700" r="1.100" fill="#e0662a"/><circle cx="15.500" cy="12.700" r="1.100" fill="#3f86d6"/><circle cx="11.500" cy="16.300" r="1.100" fill="#f3a417"/><circle cx="15.500" cy="16.300" r="1.100" fill="#5aa52f"/></svg>
<span class="t" style="left:513.04px;top:8px;font:normal normal 11px 'Liberation Sans',sans-serif;color:#5b626c;transform:scaleX(0.9588);">BP_RMG_B-2021_003-040329182</span>
<span class="t" style="left:684.00px;top:8px;font:normal normal 11px 'Liberation Sans',sans-serif;color:#5b626c;transform:scaleX(1.0230);">[Tryb zgodności] -</span>
<span class="t" style="left:777.97px;top:8px;font:normal normal 11px 'Liberation Sans',sans-serif;color:#2c5aa8;transform:scaleX(1.0274);">Microsoft Excel</span>
<svg style="left:1318px;top:5px" width="45" height="10" viewBox="0 0 45 10"><rect x="0" y="6" width="7" height="2" fill="#6d6f75"/><rect x="0" y="8" width="7" height="1" fill="#f4f8fe" opacity=".8"/><path d="M19.5 0.500h6v5.500" fill="none" stroke="#6d6f75"/><rect x="19" y="0" width="7" height="2" fill="#6d6f75"/><rect x="17.5" y="2.500" width="7" height="5" fill="none" stroke="#6d6f75"/><rect x="17" y="2" width="8" height="2" fill="#6d6f75"/><path d="M36 0.300l7 7.500M43 0.300l-7 7.500" stroke="#7990b6" stroke-width="2.300" fill="none"/></svg>
<svg style="left:1307px;top:33px" width="54" height="10" viewBox="0 0 54 10"><rect x="0" y="6" width="7" height="2" fill="#6d6f75"/><rect x="0" y="8" width="7" height="1" fill="#f4f8fe" opacity=".8"/><path d="M23.5 0.500h6v5.500" fill="none" stroke="#6d6f75"/><rect x="23" y="0" width="7" height="2" fill="#6d6f75"/><rect x="21.5" y="2.500" width="7" height="5" fill="none" stroke="#6d6f75"/><rect x="21" y="2" width="8" height="2" fill="#6d6f75"/><path d="M45 0.300l7 7.500M52 0.300l-7 7.500" stroke="#7c7f88" stroke-width="2.300" fill="none"/></svg>
<div style="left:1282px;top:30px;width:14px;height:14px;border-radius:50%;background:radial-gradient(circle at 50% 25%,#5b8fe8,#1743b4 75%);border:1px solid #fff;box-shadow:0 0 0 1px #8aa5d6"></div>
<span class="t" style="left:1284.60px;top:32px;font:normal bold 11px 'Liberation Sans',sans-serif;color:#ffffff;transform:scaleX(1.4000);">?</span>
<div class="tab" style="left:47px;top:27px;width:117px;height:25px;border:1px solid #99bbe8;border-bottom:none;border-radius:4px 4px 0 0;background:linear-gradient(to bottom,#ffffff 0,#f2f6fc 10px,#e6eefa 22px,#e1ebf8 25px);box-shadow:inset 1px 1px 0 #fff,0 0 2px rgba(255,255,255,.6)"></div>
<span class="t" style="left:57.93px;top:33px;font:normal normal 11px 'Liberation Sans',sans-serif;color:#15428b;transform:scaleX(1.0698);">Narzędzia główne</span>
<span class="t" style="left:180.00px;top:33px;font:normal normal 11px 'Liberation Sans',sans-serif;color:#15428b;transform:scaleX(1.0714);">Wstawianie</span>
<span class="t" style="left:266.92px;top:33px;font:normal normal 11px 'Liberation Sans',sans-serif;color:#15428b;transform:scaleX(1.0833);">Układ strony</span>
<span class="t" style="left:360.95px;top:33px;font:normal normal 11px 'Liberation Sans',sans-serif;color:#15428b;transform:scaleX(1.0513);">Formuły</span>
<span class="t" style="left:430.96px;top:33px;font:normal normal 11px 'Liberation Sans',sans-serif;color:#15428b;transform:scaleX(1.0400);">Dane</span>
<span class="t" style="left:488.04px;top:33px;font:normal normal 11px 'Liberation Sans',sans-serif;color:#15428b;transform:scaleX(0.9556);">Recenzja</span>
<span class="t" style="left:563.00px;top:33px;font:normal normal 11px 'Liberation Sans',sans-serif;color:#15428b;transform:scaleX(1.0645);">Widok</span>
<!-- sheet -->
<div style="left:0px;top:142px;width:1352px;height:546px;background:#a4c2ea"></div>
<div style="left:221px;top:142px;width:796px;height:546px;background:#fff;border-left:1px solid #000;border-right:3px solid #000"></div>
<span class="t" style="left:295.00px;top:143px;font:normal bold 7px 'Liberation Sans',sans-serif;color:#000;transform:scaleX(0.8071);-webkit-text-stroke:.3px #000">C:\Users\Użytkownik\Desktop\BP_RMG_B-2021_003-040329182\Kryteria_pkt</span>
<span class="t" style="left:894.00px;top:143px;font:normal bold 7px 'Liberation Sans',sans-serif;color:#000;transform:scaleX(0.8214);-webkit-text-stroke:.3px #000">2021-05-13\17:25</span>
<span class="t" style="left:262.00px;top:169px;font:normal bold 12px 'Liberation Sans',sans-serif;color:#000;transform:scaleX(0.8333);-webkit-text-stroke:.3px #000">Tabela 27. Kryteria podlegające punktacji</span>
<div style="left:259px;top:182px;width:717px;height:1px;background:repeating-linear-gradient(to right,#000 0,#000 1px,transparent 1px,transparent 2px)"></div>
<div style="left:259px;top:212px;width:717px;height:1px;background:repeating-linear-gradient(to right,#000 0,#000 1px,transparent 1px,transparent 2px)"></div>
<div style="left:259px;top:227px;width:717px;height:1px;background:repeating-linear-gradient(to right,#000 0,#000 1px,transparent 1px,transparent 2px)"></div>
<div style="left:259px;top:242px;width:717px;height:1px;background:repeating-linear-gradient(to right,#000 0,#000 1px,transparent 1px,transparent 2px)"></div>
<div style="left:259px;top:272px;width:717px;height:1px;background:repeating-linear-gradient(to right,#000 0,#000 1px,transparent 1px,transparent 2px)"></div>
<div style="left:259px;top:287px;width:717px;height:1px;background:repeating-linear-gradient(to right,#000 0,#000 1px,transparent 1px,transparent 2px)"></div>
<div style="left:259px;top:317px;width:717px;height:1px;background:repeating-linear-gradient(to right,#000 0,#000 1px,transparent 1px,transparent 2px)"></div>
<div style="left:259px;top:332px;width:717px;height:1px;background:repeating-linear-gradient(to right,#000 0,#000 1px,transparent 1px,transparent 2px)"></div>
<div style="left:259px;top:347px;width:717px;height:1px;background:repeating-linear-gradient(to right,#000 0,#000 1px,transparent 1px,transparent 2px)"></div>
<div style="left:259px;top:362px;width:717px;height:1px;background:repeating-linear-gradient(to right,#000 0,#000 1px,transparent 1px,transparent 2px)"></div>
<div style="left:259px;top:392px;width:717px;height:1px;background:repeating-linear-gradient(to right,#000 0,#000 1px,transparent 1px,transparent 2px)"></div>
<div style="left:259px;top:437px;width:717px;height:1px;background:repeating-linear-gradient(to right,#000 0,#000 1px,transparent 1px,transparent 2px)"></div>
<div style="left:259px;top:467px;width:717px;height:1px;background:repeating-linear-gradient(to right,#000 0,#000 1px,transparent 1px,transparent 2px)"></div>
<div style="left:259px;top:497px;width:717px;height:1px;background:repeating-linear-gradient(to right,#000 0,#000 1px,transparent 1px,transparent 2px)"></div>
<div style="left:259px;top:512px;width:717px;height:1px;background:repeating-linear-gradient(to right,#000 0,#000 1px,transparent 1px,transparent 2px)"></div>
<div style="left:259px;top:527px;width:717px;height:1px;background:repeating-linear-gradient(to right,#000 0,#000 1px,transparent 1px,transparent 2px)"></div>
<div style="left:259px;top:542px;width:717px;height:1px;background:repeating-linear-gradient(to right,#000 0,#000 1px,transparent 1px,transparent 2px)"></div>
<div style="left:259px;top:557px;width:717px;height:1px;background:repeating-linear-gradient(to right,#000 0,#000 1px,transparent 1px,transparent 2px)"></div>
<div style="left:259px;top:572px;width:717px;height:1px;background:repeating-linear-gradient(to right,#000 0,#000 1px,transparent 1px,transparent 2px)"></div>
<div style="left:259px;top:587px;width:717px;height:1px;background:repeating-linear-gradient(to right,#000 0,#000 1px,transparent 1px,transparent 2px)"></div>
<div style="left:259px;top:602px;width:717px;height:1px;background:repeating-linear-gradient(to right,#000 0,#000 1px,transparent 1px,transparent 2px)"></div>
<div style="left:259px;top:617px;width:717px;height:1px;background:repeating-linear-gradient(to right,#000 0,#000 1px,transparent 1px,transparent 2px)"></div>
<div style="left:259px;top:632px;width:717px;height:1px;background:repeating-linear-gradient(to right,#000 0,#000 1px,transparent 1px,transparent 2px)"></div>
<div style="left:284px;top:197px;width:692px;height:1px;background:repeating-linear-gradient(to right,#000 0,#000 1px,transparent 1px,transparent 2px)"></div>
<div style="left:259px;top:182px;width:1px;height:451px;background:repeating-linear-gradient(to bottom,#000 0,#000 1px,transparent 1px,transparent 2px)"></div>
<div style="left:284px;top:182px;width:1px;height:451px;background:repeating-linear-gradient(to bottom,#000 0,#000 1px,transparent 1px,transparent 2px)"></div>
<div style="left:657px;top:182px;width:1px;height:451px;background:repeating-linear-gradient(to bottom,#000 0,#000 1px,transparent 1px,transparent 2px)"></div>
<div style="left:702px;top:182px;width:1px;height:451px;background:repeating-linear-gradient(to bottom,#000 0,#000 1px,transparent 1px,transparent 2px)"></div>
<div style="left:975px;top:182px;width:1px;height:451px;background:repeating-linear-gradient(to bottom,#000 0,#000 1px,transparent 1px,transparent 2px)"></div>
<span class="t" style="left:262.00px;top:191px;font:normal normal 12px 'Liberation Sans',sans-serif;color:#000;transform:scaleX(1.0000);">Lp.</span>
<span class="t" style="left:432.00px;top:184px;font:normal normal 12px 'Liberation Sans',sans-serif;color:#000;transform:scaleX(0.8229);">Wyszczególnienie</span>
<span class="t" style="left:671.00px;top:184px;font:normal normal 12px 'Liberation Sans',sans-serif;color:#000;transform:scaleX(0.8636);">J.m.</span>
<span class="t" style="left:821.00px;top:184px;font:normal normal 12px 'Liberation Sans',sans-serif;color:#000;transform:scaleX(0.8372);">Wartość</span>
<span class="t" style="left:469.50px;top:200px;font:normal normal 10px 'Liberation Sans',sans-serif;color:#000;transform:scaleX(0.5000);">1</span>
<span class="t" style="left:678.00px;top:200px;font:normal normal 10px 'Liberation Sans',sans-serif;color:#000;transform:scaleX(0.8000);">2</span>
<span class="t" style="left:837.00px;top:200px;font:normal normal 10px 'Liberation Sans',sans-serif;color:#000;transform:scaleX(0.8000);">3</span>
<span class="t" style="left:261.00px;top:214px;font:normal normal 12px 'Liberation Sans',sans-serif;color:#000;transform:scaleX(1.0000);">1.</span>
<span class="t" style="left:288.00px;top:214px;font:normal normal 12px 'Liberation Sans',sans-serif;color:#000;transform:scaleX(0.8324);">Wielkość ekonomiczna gospodarstwa w okresie DOCELOWYM:</span>
<span class="t" style="left:670.12px;top:214px;font:normal normal 12px 'Liberation Sans',sans-serif;color:#000;transform:scaleX(0.8750);">EUR</span>
<span class="t" style="left:916.15px;top:214px;font:normal normal 12px 'Liberation Sans',sans-serif;color:#000;transform:scaleX(0.8462);">16 345,47</span>
<span class="t" style="left:262.00px;top:229px;font:normal normal 12px 'Liberation Sans',sans-serif;color:#000;transform:scaleX(0.8889);">2.</span>
<span class="t" style="left:287.17px;top:229px;font:normal normal 12px 'Liberation Sans',sans-serif;color:#000;transform:scaleX(0.8294);">Uczestnictwo w unijnym lub krajowym systemie jakości:</span>
<span class="t" style="left:672.00px;top:229px;font:normal normal 12px 'Liberation Sans',sans-serif;color:#000;transform:scaleX(0.8421);">T/N</span>
<span class="t" style="left:955.00px;top:229px;font:normal normal 12px 'Liberation Sans',sans-serif;color:#000;transform:scaleX(1.0000);">N</span>
<span class="t" style="left:262.00px;top:251px;font:normal normal 12px 'Liberation Sans',sans-serif;color:#000;transform:scaleX(0.8889);">3.</span>
<span class="t" style="left:287.17px;top:244px;font:normal normal 12px 'Liberation Sans',sans-serif;color:#000;transform:scaleX(0.8268);">Uczestnictwo w systemie Rolnictwo ekologiczne</span>
<span class="t" style="left:288.00px;top:259px;font:normal normal 12px 'Liberation Sans',sans-serif;color:#000;transform:scaleX(0.8339);">(na powierzchni ≥ 50% użytków rolnych gospodarstwa):</span>
<span class="t" style="left:672.00px;top:251px;font:normal normal 12px 'Liberation Sans',sans-serif;color:#000;transform:scaleX(0.8421);">T/N</span>
<span class="t" style="left:955.00px;top:251px;font:normal normal 12px 'Liberation Sans',sans-serif;color:#000;transform:scaleX(1.0000);">N</span>
<span class="t" style="left:262.00px;top:274px;font:normal normal 12px 'Liberation Sans',sans-serif;color:#000;transform:scaleX(0.8889);">4.</span>
<span class="t" style="left:287.16px;top:274px;font:normal normal 12px 'Liberation Sans',sans-serif;color:#000;transform:scaleX(0.8362);">Uprawa roślin wysokobiałkowych:</span>
<span class="t" style="left:672.00px;top:274px;font:normal normal 12px 'Liberation Sans',sans-serif;color:#000;transform:scaleX(0.8421);">T/N</span>
<span class="t" style="left:955.00px;top:274px;font:normal normal 12px 'Liberation Sans',sans-serif;color:#000;transform:scaleX(1.0000);">N</span>
<span class="t" style="left:262.00px;top:296px;font:normal normal 12px 'Liberation Sans',sans-serif;color:#000;transform:scaleX(0.8889);">5.</span>
<span class="t" style="left:288.00px;top:289px;font:normal normal 12px 'Liberation Sans',sans-serif;color:#000;transform:scaleX(0.8325);">Tzw. inwestycje budowlane położone na gruntach stanowiących własność,</span>
<span class="t" style="left:288.00px;top:304px;font:normal normal 12px 'Liberation Sans',sans-serif;color:#000;transform:scaleX(0.8288);">przedmiot wieczystego użytkowania lub dzierżawy z ZWRSP lub JST:</span>
<span class="t" style="left:672.00px;top:296px;font:normal normal 12px 'Liberation Sans',sans-serif;color:#000;transform:scaleX(0.8421);">T/N</span>
<span class="t" style="left:955.00px;top:296px;font:normal normal 12px 'Liberation Sans',sans-serif;color:#000;transform:scaleX(1.0000);">N</span>
<span class="t" style="left:262.00px;top:319px;font:normal normal 12px 'Liberation Sans',sans-serif;color:#000;transform:scaleX(0.8889);">6.</span>
<span class="t" style="left:287.18px;top:319px;font:normal normal 12px 'Liberation Sans',sans-serif;color:#000;transform:scaleX(0.8250);">Liczba szkoleń:</span>
<span class="t" style="left:678.00px;top:319px;font:normal normal 12px 'Liberation Sans',sans-serif;color:#000;transform:scaleX(1.0000);">-</span>
<span class="t" style="left:943.00px;top:319px;font:normal normal 12px 'Liberation Sans',sans-serif;color:#000;transform:scaleX(0.7826);">0,00</span>
<span class="t" style="left:262.00px;top:334px;font:normal normal 12px 'Liberation Sans',sans-serif;color:#000;transform:scaleX(0.8889);">7.</span>
<span class="t" style="left:287.17px;top:334px;font:normal normal 12px 'Liberation Sans',sans-serif;color:#000;transform:scaleX(0.8271);">Liczba usług doradczych:</span>
<span class="t" style="left:678.00px;top:334px;font:normal normal 12px 'Liberation Sans',sans-serif;color:#000;transform:scaleX(1.0000);">-</span>
<span class="t" style="left:943.00px;top:334px;font:normal normal 12px 'Liberation Sans',sans-serif;color:#000;transform:scaleX(0.7826);">0,00</span>
<span class="t" style="left:262.00px;top:349px;font:normal normal 12px 'Liberation Sans',sans-serif;color:#000;transform:scaleX(0.8889);">8.</span>
<span class="t" style="left:287.17px;top:349px;font:normal normal 12px 'Liberation Sans',sans-serif;color:#000;transform:scaleX(0.8311);">Udział w zorganizowanych formach współpracy producentów rolnych:</span>
<span class="t" style="left:672.00px;top:349px;font:normal normal 12px 'Liberation Sans',sans-serif;color:#000;transform:scaleX(0.8421);">T/N</span>
<span class="t" style="left:955.00px;top:349px;font:normal normal 12px 'Liberation Sans',sans-serif;color:#000;transform:scaleX(1.0000);">N</span>
<span class="t" style="left:262.00px;top:371px;font:normal normal 12px 'Liberation Sans',sans-serif;color:#000;transform:scaleX(0.8889);">9.</span>
<span class="t" style="left:287.17px;top:364px;font:normal normal 12px 'Liberation Sans',sans-serif;color:#000;transform:scaleX(0.8309);">Prowadzenie działalności w zakresie przygotowania do sprzedaży produktów</span>
<span class="t" style="left:288.00px;top:379px;font:normal normal 12px 'Liberation Sans',sans-serif;color:#000;transform:scaleX(0.8169);">rolnych wytwarzanych w gospodarstwie:</span>
<span class="t" style="left:672.00px;top:371px;font:normal normal 12px 'Liberation Sans',sans-serif;color:#000;transform:scaleX(0.8421);">T/N</span>
<span class="t" style="left:956.00px;top:371px;font:normal normal 12px 'Liberation Sans',sans-serif;color:#000;transform:scaleX(0.8571);">T</span>
<span class="t" style="left:261.13px;top:409px;font:normal normal 12px 'Liberation Sans',sans-serif;color:#000;transform:scaleX(0.8667);">10.</span>
<span class="t" style="left:287.17px;top:394px;font:normal normal 12px 'Liberation Sans',sans-serif;color:#000;transform:scaleX(0.8306);">Prowadzenie działalności w zakresie przetwarzania produktów rolnych</span>
<span class="t" style="left:288.00px;top:409px;font:normal normal 12px 'Liberation Sans',sans-serif;color:#000;transform:scaleX(0.8000);">wytwarzanych</span>
<span class="t" style="left:288.00px;top:424px;font:normal normal 12px 'Liberation Sans',sans-serif;color:#000;transform:scaleX(0.8152);">w gospodarstwie:</span>
<span class="t" style="left:672.00px;top:409px;font:normal normal 12px 'Liberation Sans',sans-serif;color:#000;transform:scaleX(0.8421);">T/N</span>
<span class="t" style="left:955.00px;top:409px;font:normal normal 12px 'Liberation Sans',sans-serif;color:#000;transform:scaleX(1.0000);">N</span>
<span class="t" style="left:261.10px;top:446px;font:normal normal 12px 'Liberation Sans',sans-serif;color:#000;transform:scaleX(0.9048);">11.1</span>
<span class="t" style="left:287.17px;top:446px;font:normal normal 12px 'Liberation Sans',sans-serif;color:#000;transform:scaleX(0.8326);">Udział zbóż w strukturze zasiewów na gruntach ornych w okresie DOCELOWYM:</span>
<span class="t" style="left:675.00px;top:446px;font:normal normal 12px 'Liberation Sans',sans-serif;color:#000;transform:scaleX(1.0000);">%</span>
<span class="t" style="left:937.00px;top:446px;font:normal normal 12px 'Liberation Sans',sans-serif;color:#000;transform:scaleX(0.8000);">65,45</span>
<span class="t" style="left:261.10px;top:476px;font:normal normal 12px 'Liberation Sans',sans-serif;color:#000;transform:scaleX(0.9048);">11.2</span>
<span class="t" style="left:287.17px;top:476px;font:normal normal 12px 'Liberation Sans',sans-serif;color:#000;transform:scaleX(0.8326);">Udział zbóż w strukturze zasiewów na gruntach ornych w okresie DOCELOWYM:</span>
<span class="t" style="left:672.00px;top:476px;font:normal normal 12px 'Liberation Sans',sans-serif;color:#000;transform:scaleX(0.8421);">T/N</span>
<span class="t" style="left:956.00px;top:476px;font:normal normal 12px 'Liberation Sans',sans-serif;color:#000;transform:scaleX(0.8571);">T</span>
<span class="t" style="left:261.13px;top:499px;font:normal normal 12px 'Liberation Sans',sans-serif;color:#000;transform:scaleX(0.8667);">12.</span>
<span class="t" style="left:287.17px;top:499px;font:normal normal 12px 'Liberation Sans',sans-serif;color:#000;transform:scaleX(0.8344);">Plan nawozowy z uwzględnieniem analizy chemicznej gleby:</span>
<span class="t" style="left:672.00px;top:499px;font:normal normal 12px 'Liberation Sans',sans-serif;color:#000;transform:scaleX(0.8421);">T/N</span>
<span class="t" style="left:955.00px;top:499px;font:normal normal 12px 'Liberation Sans',sans-serif;color:#000;transform:scaleX(1.0000);">N</span>
<span class="t" style="left:261.13px;top:514px;font:normal normal 12px 'Liberation Sans',sans-serif;color:#000;transform:scaleX(0.8667);">13.</span>
<span class="t" style="left:287.16px;top:514px;font:normal normal 12px 'Liberation Sans',sans-serif;color:#000;transform:scaleX(0.8358);">Planowane inwestycje W ZAKRESIE OCHRONY ŚRODOWISKA I KLIMATU:</span>
<span class="t" style="left:671.00px;top:514px;font:normal normal 12px 'Liberation Sans',sans-serif;color:#000;transform:scaleX(0.8947);">pkt.</span>
<span class="t" style="left:943.00px;top:514px;font:normal normal 12px 'Liberation Sans',sans-serif;color:#000;transform:scaleX(0.7826);">0,00</span>
<span class="t" style="left:261.13px;top:529px;font:normal normal 12px 'Liberation Sans',sans-serif;color:#000;transform:scaleX(0.8667);">14.</span>
<span class="t" style="left:287.18px;top:529px;font:normal normal 12px 'Liberation Sans',sans-serif;color:#000;transform:scaleX(0.8235);">Postęp biologiczny:</span>
<span class="t" style="left:672.00px;top:529px;font:normal normal 12px 'Liberation Sans',sans-serif;color:#000;transform:scaleX(0.8421);">T/N</span>
<span class="t" style="left:955.00px;top:529px;font:normal normal 12px 'Liberation Sans',sans-serif;color:#000;transform:scaleX(1.0000);">N</span>
<span class="t" style="left:261.13px;top:544px;font:normal normal 12px 'Liberation Sans',sans-serif;color:#000;transform:scaleX(0.8667);">15.</span>
<span class="t" style="left:288.00px;top:544px;font:normal normal 12px 'Liberation Sans',sans-serif;color:#000;transform:scaleX(0.8305);">Organizacja produkcji:</span>
<span class="t" style="left:672.00px;top:544px;font:normal normal 12px 'Liberation Sans',sans-serif;color:#000;transform:scaleX(0.8421);">T/N</span>
<span class="t" style="left:955.00px;top:544px;font:normal normal 12px 'Liberation Sans',sans-serif;color:#000;transform:scaleX(1.0000);">N</span>
<span class="t" style="left:261.13px;top:559px;font:normal normal 12px 'Liberation Sans',sans-serif;color:#000;transform:scaleX(0.8667);">16.</span>
<span class="t" style="left:287.17px;top:559px;font:normal normal 12px 'Liberation Sans',sans-serif;color:#000;transform:scaleX(0.8333);">Nowoczesne technologie produkcji:</span>
<span class="t" style="left:672.00px;top:559px;font:normal normal 12px 'Liberation Sans',sans-serif;color:#000;transform:scaleX(0.8421);">T/N</span>
<span class="t" style="left:955.00px;top:559px;font:normal normal 12px 'Liberation Sans',sans-serif;color:#000;transform:scaleX(1.0000);">N</span>
<span class="t" style="left:261.13px;top:574px;font:normal normal 12px 'Liberation Sans',sans-serif;color:#000;transform:scaleX(0.8667);">17.</span>
<span class="t" style="left:287.16px;top:574px;font:normal normal 12px 'Liberation Sans',sans-serif;color:#000;transform:scaleX(0.8378);">Innowacyjny produkt:</span>
<span class="t" style="left:672.00px;top:574px;font:normal normal 12px 'Liberation Sans',sans-serif;color:#000;transform:scaleX(0.8421);">T/N</span>
<span class="t" style="left:955.00px;top:574px;font:normal normal 12px 'Liberation Sans',sans-serif;color:#000;transform:scaleX(1.0000);">N</span>
<span class="t" style="left:261.13px;top:589px;font:normal normal 12px 'Liberation Sans',sans-serif;color:#000;transform:scaleX(0.8667);">18.</span>
<span class="t" style="left:288.00px;top:589px;font:normal normal 12px 'Liberation Sans',sans-serif;color:#000;transform:scaleX(0.8158);">Województwo:</span>
<span class="t" style="left:678.00px;top:589px;font:normal normal 12px 'Liberation Sans',sans-serif;color:#000;transform:scaleX(1.0000);">-</span>
<span class="t" style="left:890.15px;top:589px;font:normal normal 12px 'Liberation Sans',sans-serif;color:#000;transform:scaleX(0.8452);">MAŁOPOLSKIE</span>
<span class="t" style="left:261.13px;top:604px;font:normal normal 12px 'Liberation Sans',sans-serif;color:#000;transform:scaleX(0.8667);">19.</span>
<span class="t" style="left:288.00px;top:604px;font:normal normal 12px 'Liberation Sans',sans-serif;color:#000;transform:scaleX(0.8319);">Czy zaplanowano zmianę profilu produkcji (kierunku produkcji)?</span>
<span class="t" style="left:672.00px;top:604px;font:normal normal 12px 'Liberation Sans',sans-serif;color:#000;transform:scaleX(0.8421);">T/N</span>
<span class="t" style="left:956.00px;top:604px;font:normal normal 12px 'Liberation Sans',sans-serif;color:#000;transform:scaleX(0.8571);">T</span>
<span class="t" style="left:287.17px;top:619px;font:normal normal 12px 'Liberation Sans',sans-serif;color:#000;transform:scaleX(0.8256);">Suma kontrolna:</span>
<span class="t" style="left:915.00px;top:619px;font:normal bold 12px 'Liberation Sans',sans-serif;color:#000;transform:scaleX(0.8182);-webkit-text-stroke:.3px #000">602 744</span>
<svg style="left:657px;top:617px" width="46" height="16" viewBox="0 0 46 16"><path d="M0.5 0.5L45.5 15.5M45.5 0.5L0.5 15.5" stroke="#000" stroke-width="1" fill="none"/></svg>
<!-- scrollbars -->
<div style="left:1352px;top:142px;width:14px;height:546px;background:linear-gradient(to right,#89a8d3 0,#7b9bc8 3px,#7797c4 100%)"></div>
<div style="left:0px;top:688px;width:1352px;height:15px;background:linear-gradient(to bottom,#7193c4 0,#7193c4 1px,#7c9cc8 1px,#7898c5 14px,#5c83bd 14px,#5c83bd 15px)"></div>
<div style="left:1352px;top:688px;width:14px;height:15px;background:#7f9fd3"></div>
<div style="left:1351px;top:142px;width:1px;height:546px;background:#b5cdf3"></div>
<div style="left:1352px;top:310px;width:14px;height:98px;border:1px solid #4f628c;border-radius:2px;background:linear-gradient(to right,#eef1f7 0,#e2e7f0 45%,#c3cddf 50%,#d6dde9 100%);box-shadow:inset 0 0 0 1px rgba(255,255,255,.5)"></div>
<svg style="left:1356px;top:355px" width="7" height="8" viewBox="0 0 7 8"><path d="M0 0.5h7M0 2.500h7M0 4.500h7M0 6.500h7" stroke="#6f86ad"/></svg>
<svg style="left:1355px;top:146px" width="9" height="5" viewBox="0 0 9 5"><path d="M0 5L4.500 0 9 5z" fill="#4a5278"/></svg>
<svg style="left:1355px;top:678px" width="9" height="5" viewBox="0 0 9 5"><path d="M0 0L4.500 5 9 0z" fill="#4a5278"/></svg>
<div style="left:740px;top:688px;width:259px;height:14px;border:1px solid #4f628c;border-radius:2px;background:linear-gradient(to bottom,#eef1f7 0,#e2e7f0 45%,#c3cddf 50%,#b9c4d8 100%);box-shadow:inset 0 0 0 1px rgba(255,255,255,.5)"></div>
<svg style="left:866px;top:692px" width="8" height="7" viewBox="0 0 8 7"><path d="M0.500 0v7M2.500 0v7M4.500 0v7M6.500 0v7" stroke="#777c88"/></svg>
<svg style="left:4px;top:690px" width="5" height="9" viewBox="0 0 5 9"><path d="M5 0L0 4.500 5 9z" fill="#3f5688"/></svg>
<svg style="left:1342px;top:690px" width="5" height="9" viewBox="0 0 5 9"><path d="M0 0L5 4.500 0 9z" fill="#3f5688"/></svg>
<!-- status bar -->
<div style="left:0px;top:703px;width:1366px;height:21px;background:linear-gradient(to bottom,#fff 0,#fff 1px,#d8e7fb 1px,#cfe0f8 7px,#a9c8f2 7px,#d7e6f9 20px,#8fb0e0 20px,#8fb0e0 21px)"></div>
<div style="left:1119px;top:704px;width:1px;height:19px;background:#fff"></div>
<div style="left:1120px;top:704px;width:246px;height:20px;background:linear-gradient(to bottom,#c3d7f5 0,#a9c6ef 3px,#8eb1e6 6px,#7fa5e0 6px,#9dbcec 17px,#b9d0f3 19px,#5f88c6 19px,#5f88c6 20px)"></div>
<div style="left:1120px;top:704px;width:1px;height:19px;background:#5d86c4"></div>
<div style="left:1121px;top:704px;width:1px;height:19px;background:#dce9fb"></div>
<div style="left:71px;top:704px;width:1px;height:20px;background:#8fb0e2"></div>
<div style="left:72px;top:704px;width:1px;height:20px;background:#f2f7fe"></div>
<span class="t" style="left:8.00px;top:707px;font:normal normal 11px 'Liberation Sans',sans-serif;color:#15428b;transform:scaleX(1.0541);">Gotowy</span>
<div style="left:1126px;top:704px;width:58px;height:19px;border:1px solid #4f7cc0;border-radius:3px;background:linear-gradient(to bottom,#d3e3f9 0,#c8dcf6 45%,#b9d2f3 50%,#cfe0f8 100%)"></div>
<div style="left:1145px;top:705px;width:1px;height:17px;background:#a9c6ef"></div>
<div style="left:1164px;top:705px;width:19px;height:17px;border-radius:0 2px 2px 0;background:linear-gradient(to bottom,#fde0b0 0,#fcd08a 45%,#fbb03c 50%,#fee48f 100%)"></div>
<svg style="left:1130px;top:708px" width="13" height="11" viewBox="0 0 13 11"><path d="M0.500 0.500h12v10h-12zM0.500 3.500h12M0.500 6.500h12M4.500 0.500v10M8.500 0.500v10" fill="#fff" stroke="#555"/></svg>
<svg style="left:1148px;top:707px" width="13" height="12" viewBox="0 0 13 12"><rect x="0.500" y="0.500" width="12" height="11" fill="#b0b4bc" stroke="#555"/><rect x="3.500" y="2.500" width="6" height="7" fill="#fff" stroke="#555"/><path d="M5 4.500h3M5 6.500h3" stroke="#c8c8c8"/></svg>
<svg style="left:1167px;top:707px" width="13" height="12" viewBox="0 0 13 12"><rect x="0.500" y="0.500" width="12" height="11" fill="#b0b4bc" stroke="#555"/><rect x="1" y="1" width="3.200" height="6" fill="#fff"/><rect x="5.200" y="1" width="3.200" height="6" fill="#fff"/><path d="M4.700 1v6.500M0.500 7.500h8.500V1" fill="none" stroke="#555"/></svg>
<span class="t" style="left:1192.00px;top:707px;font:normal normal 11px 'Liberation Sans',sans-serif;color:#15428b;transform:scaleX(0.9091);">75%</span>
<div style="left:1227px;top:705px;width:16px;height:16px;border-radius:50%;border:1px solid #53699a;background:radial-gradient(circle at 50% 30%,#fff,#c9d8ef 80%)"></div><svg style="left:1231px;top:709px" width="8" height="8" viewBox="0 0 8 8"><path d="M0 4h8" stroke="#3b4a66" stroke-width="2"/></svg>
<div style="left:1345px;top:705px;width:16px;height:16px;border-radius:50%;border:1px solid #53699a;background:radial-gradient(circle at 50% 30%,#fff,#c9d8ef 80%)"></div><svg style="left:1349px;top:709px" width="8" height="8" viewBox="0 0 8 8"><path d="M0 4h8M4 0v8" stroke="#3b4a66" stroke-width="2"/></svg>
<div style="left:1245px;top:713px;width:100px;height:1px;background:#e9f0fb"></div>
<div style="left:1295px;top:708px;width:1px;height:10px;background:#e9f0fb"></div>
<svg style="left:1276px;top:706px" width="10" height="14" viewBox="0 0 10 14"><path d="M0.500 0.500h9v9l-4.500 4-4.500-4z" fill="#e8eef8" stroke="#53699a"/></svg>
<!-- taskbar -->
<div style="left:0px;top:724px;width:1366px;height:44px;background:#d4d0c8"></div>
<div style="left:0px;top:725px;width:1366px;height:1px;background:#fff"></div>
<div style="left:2px;top:728px;width:52px;height:38px;background:#d4d0c8;border:1px solid;border-color:#fff #404040 #404040 #fff;box-shadow:inset -1px -1px 0 #808080"></div>
<svg style="left:5px;top:739px" width="16" height="15" viewBox="0 0 16 15"><path d="M2 2c2-1 4-1 6 0l-1.500 5c-2-1-4-1-6 0z" fill="#e8442a"/><path d="M9 2.500c2 1 4 1 6 0l-1.500 5c-2 1-4 1-6 0z" fill="#6ab43a"/><path d="M0.500 8c2-1 4-1 6 0L5 13c-2-1-4-1-6 0z" fill="#3a76d8"/><path d="M7.300 8.500c2 1 4 1 6 0l-1.500 5c-2 1-4 1-6 0z" fill="#f3b51c"/></svg>
<span class="t" style="left:21.00px;top:741px;font:normal bold 11px 'Liberation Sans',sans-serif;color:#000;transform:scaleX(1.1200);">Start</span>
<svg style="left:71px;top:729px" width="33" height="34" viewBox="0 0 33 34"><defs><linearGradient id="ieg" x1="0" y1="0" x2="0" y2="1"><stop offset="0" stop-color="#7fd0fa"/><stop offset=".5" stop-color="#2f9fe6"/><stop offset="1" stop-color="#1b78cf"/></linearGradient></defs><circle cx="17.500" cy="18" r="9.600" fill="none" stroke="url(#ieg)" stroke-width="6.400"/><rect x="10" y="15.800" width="19" height="4.400" fill="#2f9fe6"/><path d="M21 20.200h11v5h-8z" fill="#d4d0c8"/><path d="M3 31C-2 25 8 9 21 4c6-2.500 10-1 9.500 2.500" fill="none" stroke="#f5c21a" stroke-width="2.400" stroke-linecap="round"/><path d="M3 31c2 2 6 1 9-1" fill="none" stroke="#f5c21a" stroke-width="2" stroke-linecap="round"/></svg>
<svg style="left:122px;top:734px" width="30" height="27" viewBox="0 0 30 27"><rect x="5.500" y="2.500" width="22" height="21" fill="#a9cdef" stroke="#7fb0de"/><rect x="3.500" y="2" width="22" height="22" fill="#c4def5" stroke="#7fb0de"/><rect x="1.500" y="1.500" width="21" height="23" fill="#b5d5f2" stroke="#6a9ed1"/><circle cx="11.500" cy="13.500" r="8.300" fill="#f07b1a"/><circle cx="11.500" cy="13.500" r="8.300" fill="none" stroke="#f9a050" stroke-width="1"/><path d="M8.500 8l8.500 5.500-8.500 5.500z" fill="#fff"/></svg>
<div style="left:163px;top:728px;width:47px;height:38px;background:#fff;border:1px solid;border-color:#404040 #fff #fff #404040;box-shadow:inset 1px 1px 0 #404040"></div>
<svg style="left:170px;top:730px" width="34" height="33" viewBox="0 0 34 33"><defs><linearGradient id="xg" x1="0" y1="0" x2="1" y2="1"><stop offset="0" stop-color="#7fae6d"/><stop offset=".6" stop-color="#eef5ea"/><stop offset="1" stop-color="#fff"/></linearGradient></defs><path d="M1.500 28V9c0-5 3-8 8-8h18v27z" fill="url(#xg)" stroke="#3aa61c" stroke-width="1.300"/><path d="M5 8l27 4-2 19L4 29z" fill="#eff5ea" stroke="#d5e2cf" stroke-width=".6"/><g fill="#5e9e49"><path d="M21 11.500l7 1-.500 3.500-7-1z"/><path d="M20 17.500l7 1-.500 3.500-7-1z"/><path d="M19.500 23.500l7 1-.500 3.500-7-1z"/><path d="M12 22.500l6 .800-.500 3.500-6-.800z"/><path d="M5 21.500l6 .800-.500 3.500-6-.800z"/></g><path d="M7 10l11 10M18 11L7 19" stroke="#1f6b1f" stroke-width="3.600"/></svg>
<svg style="left:220px;top:730px" width="34" height="34" viewBox="0 0 34 34"><defs><linearGradient id="og" x1="0" y1="0" x2="1" y2="1"><stop offset="0" stop-color="#f8cf8e"/><stop offset=".6" stop-color="#fdf1dc"/><stop offset="1" stop-color="#fff"/></linearGradient></defs><path d="M1.500 28V9c0-5 3-8 8-8h18v27z" fill="url(#og)" stroke="#f09a14" stroke-width="1.300"/><path d="M5 7l27 3-2 18-26-2z" fill="#f6f3ec" stroke="#d8d0c0" stroke-width=".6"/><path d="M5 7l12 11L32 10" fill="none" stroke="#d9a04a" stroke-width="1"/><circle cx="17.500" cy="20.500" r="8.300" fill="#f8d552" stroke="#d39a14"/><circle cx="16" cy="18" r="5" fill="#fbe68c" opacity=".7"/><path d="M13 18l4.500 3.500 4.500-3" fill="none" stroke="#9a6a14" stroke-width="1.500"/></svg>
<svg style="left:271px;top:730px" width="32" height="33" viewBox="0 0 32 33"><defs><radialGradient id="ff" cx=".75" cy=".1" r="1.050"><stop offset="0" stop-color="#fff36a"/><stop offset=".3" stop-color="#ffbd2e"/><stop offset=".6" stop-color="#ff6a2a"/><stop offset="1" stop-color="#e4106f"/></radialGradient><radialGradient id="fp" cx=".5" cy=".3" r=".7"><stop offset="0" stop-color="#a060f0"/><stop offset="1" stop-color="#5a2fc0"/></radialGradient></defs><path d="M20 0.500c1 3 5 5 8 11 4 9-1 21-12 21C6 32.500-1 24 1.500 14c.500-2 1.500-4 3-5 0 1.500.500 2.500 1 3 1.500-4 4-6 7-7.500 0 2 1 3.500 3 4 3 1 6 4 5 8 3-3 3-10-.500-16z" fill="url(#ff)"/><circle cx="16" cy="19.500" r="6.500" fill="url(#fp)"/><path d="M5 15c3-4 9-4 12-1-3 0-5 2-4 4-3 1-7 0-8-3z" fill="#ff9a2a"/><path d="M12 10c3-1 7 0 9 3" fill="none" stroke="#ffcf40" stroke-width="1.500"/></svg>
<div style="left:1158px;top:728px;width:205px;height:38px;border:1px solid;border-color:#808080 #fff #fff #808080"></div>
<svg style="left:1164px;top:740px" width="8" height="10" viewBox="0 0 8 10"><path d="M1 4.500l3-3 3 3M1 9l3-3 3 3" fill="none" stroke="#000" stroke-width="1.600"/></svg>
<svg style="left:1180px;top:737px" width="18" height="18" viewBox="0 0 18 18"><path d="M1 6.500h3l4-4v13l-4-4H1z" fill="#e6e6e6" stroke="#666"/><path d="M10.500 5.500c1.500 2 1.500 5 0 7M13 3.500c2.500 3 2.500 8 0 11" fill="none" stroke="#777" stroke-width="1.300"/></svg>
<svg style="left:1204px;top:737px" width="19" height="18" viewBox="0 0 19 18"><rect x="6.500" y="4.500" width="11" height="9" fill="#b8b8b8" stroke="#555"/><rect x="5" y="14.500" width="13" height="2" fill="#777"/><path d="M3.500 1v4M1.500 2v4h4V2M3.500 6v9h4" fill="none" stroke="#444" stroke-width="1.200"/></svg>
<svg style="left:1229px;top:737px" width="17" height="18" viewBox="0 0 17 18"><path d="M2.500 1v16" stroke="#666" stroke-width="1.800"/><path d="M4 2.500c4-2 6 2 11 0-1 3-1 5-2 7-4 2-6-2-9 0z" fill="#f2f2f2" stroke="#777"/></svg>
<svg style="left:1252px;top:738px" width="17" height="17" viewBox="0 0 17 17"><g fill="#f47a20"><circle cx="8.500" cy="8.500" r="5.600"/><circle cx="11.800" cy="2.800" r="2.300"/><circle cx="14.200" cy="11.800" r="2.300"/><circle cx="5.200" cy="14.200" r="2.300"/><circle cx="2.800" cy="5.200" r="2.300"/></g></svg>
<span class="t" style="left:1258.00px;top:742px;font:normal bold 9px 'Liberation Sans',sans-serif;color:#fff;transform:scaleX(1.2000);">a</span>
<span class="t" style="left:1297.04px;top:733px;font:normal normal 11px 'Liberation Sans',sans-serif;color:#000;transform:scaleX(0.9630);">17:30</span>
<span class="t" style="left:1283.00px;top:749px;font:normal normal 11px 'Liberation Sans',sans-serif;color:#000;transform:scaleX(0.9821);">2021-05-13</span>
<svg style="left:1346px;top:740px" width="15" height="15" viewBox="0 0 15 15"><rect x="0" y="0" width="15" height="11" fill="#2c62c8"/><rect x="1" y="1" width="13" height="7" fill="#4f8df0"/><rect x="0" y="11" width="15" height="2" fill="#222"/><rect x="1" y="9" width="2" height="2" fill="#e44"/></svg>
</div>
</body></html>
